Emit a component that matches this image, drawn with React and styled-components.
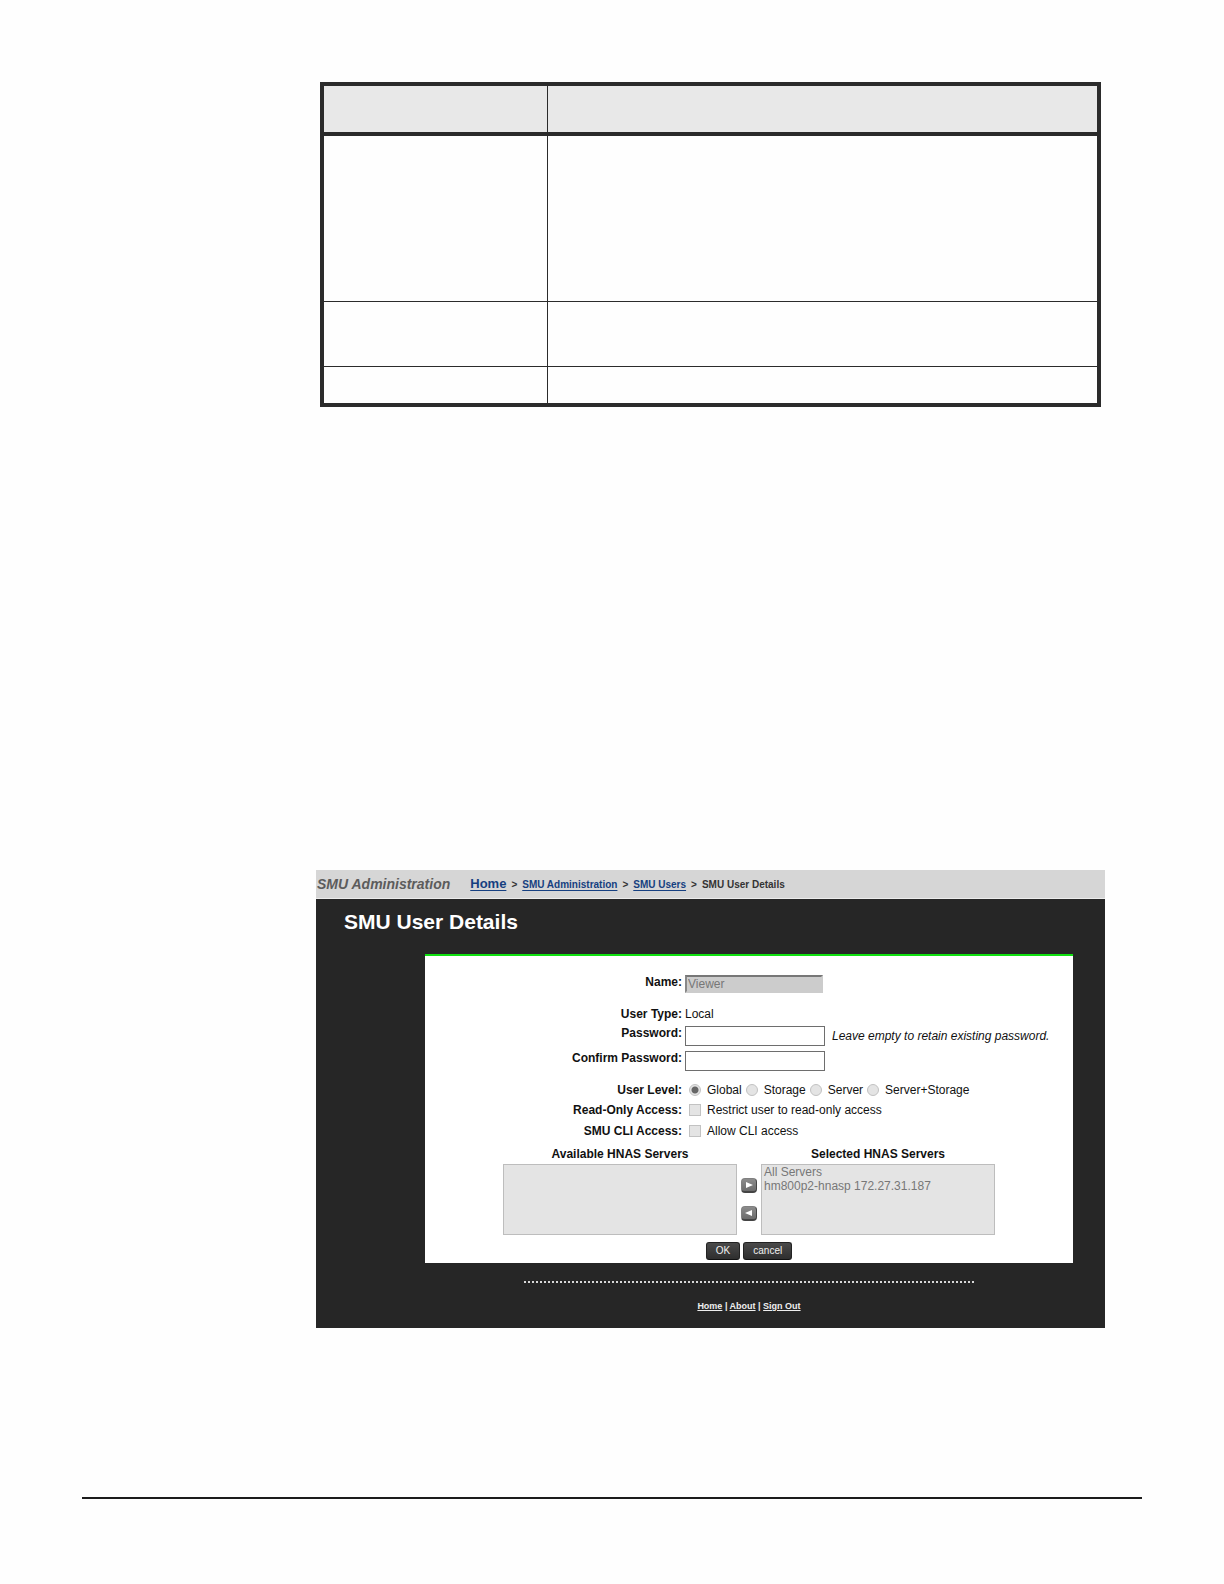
import React from "react";
import styled, { createGlobalStyle, css } from "styled-components";

const ink = "#2b2b2b";
const panel = "#262626";

const GlobalStyle = createGlobalStyle`
  *, *::before, *::after { box-sizing: border-box; }
  body {
    margin: 0;
    background: #fefefe;
    color: #111;
    font-family: "Liberation Sans", Arial, sans-serif;
    font-size: 12px;
    line-height: 14px;
  }
`;

const Page = styled.main`
  padding: 82px 82px 85px;
`;

const PageContent = styled.div`
  padding: 0 37px 0 234px;
`;

const TableFrame = styled.div`
  padding: 0 4px;
`;

const SpecTable = styled.table`
  width: 100%;
  table-layout: fixed;
  border: 4px solid ${ink};
  border-spacing: 0;
`;

const FirstColumn = styled.col`
  width: 224px;
`;

const cell = css`
  padding: 0;
  height: ${(p) => p.$height}px;
  &:first-child { border-right: 1px solid ${ink}; }
`;

const HeadCell = styled.th`
  ${cell}
  background: #e8e8e8;
  border-bottom: 4px solid ${ink};
`;

const BodyCell = styled.td`
  ${cell}
  tr:not(:last-child) > & { border-bottom: 1px solid ${ink}; }
`;

const Figure = styled.section`
  margin-top: 463px;
  background: ${panel};
`;

const TopBar = styled.header`
  display: flex;
  align-items: center;
  gap: 20px;
  height: 29px;
  padding: 0 1px;
  background: #d6d6d6;
  border-bottom: 1px solid #ececec;
`;

const SectionName = styled.span`
  color: #5c5c5c;
  font-size: 14px;
  font-style: italic;
  font-weight: bold;
`;

const Crumbs = styled.nav`
  display: flex;
  align-items: baseline;
  gap: 5px;
  color: #333;
  font-size: 10px;
  font-weight: bold;
`;

const Crumb = styled.a`
  color: #153f80;
  font-size: ${(p) => (p.$root ? 13 : 10)}px;
  text-underline-offset: 2px;
`;

const Title = styled.h1`
  margin: 0;
  padding: 11px 28px 20px;
  color: #fff;
  font-size: 21px;
  line-height: 24px;
`;

const Inner = styled.div`
  padding: 0 32px 0 109px;
`;

const Form = styled.form`
  padding: 19px 0 3px;
  background: #fff;
  border-top: 2px solid #0fe00f;
`;

const Row = styled.div`
  display: grid;
  grid-template-columns: 257px 1fr;
  column-gap: 3px;
  align-items: start;
  min-height: ${(p) => p.$height}px;
`;

const RowLabel = styled.label`
  font-weight: bold;
  text-align: right;
`;

const Value = styled.div`
  display: flex;
  align-items: center;
`;

const TextInput = styled.input`
  width: 140px;
  height: 20px;
  padding: 0 2px;
  background: #fff;
  border: 1px solid #6e6e6e;
  border-radius: 0;
  font: inherit;

  &:disabled {
    width: 138px;
    height: 18px;
    padding: 0 1px;
    background: #ccc;
    border: 2px solid #ccc;
    border-top-color: #777;
    border-left-color: #888;
    color: #777;
  }
`;

const Note = styled.em`
  margin-left: 7px;
`;

const Choices = styled.div`
  display: flex;
  gap: 4px;
  padding-left: 4px;
`;

const Choice = styled.label`
  display: flex;
  align-items: center;
  gap: 6px;
`;

const Mark = styled.input`
  appearance: none;
  width: 12px;
  height: 12px;
  margin: 0;
  background: #e4e4e4;
  border: 1px solid #c2c2c2;
  border-radius: ${(p) => (p.type === "radio" ? "50%" : "0")};

  &:checked {
    background: radial-gradient(circle, #666 0 3px, #e4e4e4 4px);
  }
`;

const Transfer = styled.div`
  display: grid;
  grid-template-columns: 234px 16px 234px;
  justify-content: center;
  column-gap: 4px;
  margin-bottom: 7px;
`;

const ListField = styled.div`
  display: flex;
  flex-direction: column;
  gap: 3px;
`;

const ListLabel = styled.label`
  font-weight: bold;
  text-align: center;
`;

const ListBox = styled.select`
  width: 100%;
  height: 71px;
  padding: 0;
  overflow: hidden;
  background: #e4e4e4;
  border: 1px solid #bdbdbd;
  border-radius: 0;
  font: inherit;
  opacity: 1;

  option {
    min-height: 13px;
    padding: 0 2px;
    color: #777;
    line-height: 13px;
  }
`;

const Arrows = styled.div`
  display: flex;
  flex-direction: column;
  justify-content: center;
  gap: 13px;
  padding-top: 17px;
`;

const ArrowButton = styled.button`
  display: grid;
  place-items: center;
  width: 16px;
  height: 15px;
  padding: 0;
  background: linear-gradient(#8c8c8c, #6c6c6c);
  border: 1px solid #808080;
  border-right-color: #444;
  border-bottom: 2px solid #444;
  border-radius: 4px;
`;

const Actions = styled.div`
  display: flex;
  justify-content: center;
  gap: 3px;
`;

const ActionButton = styled.button`
  height: 18px;
  padding: 0 9px;
  background: linear-gradient(#4a4a4a, #2e2e2e);
  border: 1px solid #222;
  border-bottom-color: #111;
  border-radius: 3px;
  color: #f0f0f0;
  font-family: inherit;
  font-size: 10px;
  line-height: 14px;
`;

const Footer = styled.footer`
  display: flex;
  flex-direction: column;
  align-items: center;
  gap: 16px;
  padding: 18px 0 15px;
`;

const Dots = styled.hr`
  width: 450px;
  max-width: 100%;
  margin: 0;
  border: 0;
  border-top: 2px dotted #d8d8d8;
`;

const FooterLinks = styled.nav`
  color: #eee;
  font-size: 9px;
  font-weight: bold;

  a { color: inherit; }
`;

const PageRule = styled.hr`
  margin: 169px 0 0;
  border: 0;
  border-top: 2px solid #1c1c1c;
`;

const levels = ["Global", "Storage", "Server", "Server+Storage"];
const bodyRows = [166, 65, 36];

function Arrow({ left }) {
  return (
    <svg width="8" height="8" viewBox="0 0 8 8" aria-hidden="true">
      <path d={left ? "M7 1v6L0 4z" : "M1 1v6l7-3z"} fill="#fff" />
    </svg>
  );
}

export default function App() {
  return (
    <Page>
      <GlobalStyle />
      <PageContent>
        <TableFrame>
          <SpecTable>
            <colgroup>
              <FirstColumn />
              <col />
            </colgroup>
            <thead>
              <tr>
                <HeadCell $height={50} />
                <HeadCell $height={50} />
              </tr>
            </thead>
            <tbody>
              {bodyRows.map((height) => (
                <tr key={height}>
                  <BodyCell $height={height} />
                  <BodyCell $height={height} />
                </tr>
              ))}
            </tbody>
          </SpecTable>
        </TableFrame>

        <Figure>
          <TopBar>
            <SectionName>SMU Administration</SectionName>
            <Crumbs>
              <Crumb href="#home" $root>Home</Crumb>
              <span>&gt;</span>
              <Crumb href="#admin">SMU Administration</Crumb>
              <span>&gt;</span>
              <Crumb href="#users">SMU Users</Crumb>
              <span>&gt;</span>
              <span>SMU User Details</span>
            </Crumbs>
          </TopBar>
          <Title>SMU User Details</Title>
          <Inner>
            <Form onSubmit={(e) => e.preventDefault()}>
              <Row $height={32}>
                <RowLabel htmlFor="name">Name:</RowLabel>
                <Value>
                  <TextInput id="name" type="text" defaultValue="Viewer" disabled />
                </Value>
              </Row>
              <Row $height={19}>
                <RowLabel as="span">User Type:</RowLabel>
                <Value>Local</Value>
              </Row>
              <Row $height={25}>
                <RowLabel htmlFor="password">Password:</RowLabel>
                <Value>
                  <TextInput id="password" type="password" />
                  <Note>Leave empty to retain existing password.</Note>
                </Value>
              </Row>
              <Row $height={32}>
                <RowLabel htmlFor="confirm">Confirm Password:</RowLabel>
                <Value>
                  <TextInput id="confirm" type="password" />
                </Value>
              </Row>
              <Row $height={20}>
                <RowLabel as="span" id="level">User Level:</RowLabel>
                <Choices role="radiogroup" aria-labelledby="level">
                  {levels.map((level) => (
                    <Choice key={level}>
                      <Mark type="radio" name="level" defaultChecked={level === "Global"} disabled />
                      {level}
                    </Choice>
                  ))}
                </Choices>
              </Row>
              <Row $height={21}>
                <RowLabel htmlFor="readonly">Read-Only Access:</RowLabel>
                <Choices>
                  <Choice>
                    <Mark id="readonly" type="checkbox" disabled />
                    Restrict user to read-only access
                  </Choice>
                </Choices>
              </Row>
              <Row $height={23}>
                <RowLabel htmlFor="cli">SMU CLI Access:</RowLabel>
                <Choices>
                  <Choice>
                    <Mark id="cli" type="checkbox" disabled />
                    Allow CLI access
                  </Choice>
                </Choices>
              </Row>
              <Transfer>
                <ListField>
                  <ListLabel htmlFor="available">Available HNAS Servers</ListLabel>
                  <ListBox id="available" multiple disabled />
                </ListField>
                <Arrows>
                  <ArrowButton type="button" aria-label="Add server"><Arrow /></ArrowButton>
                  <ArrowButton type="button" aria-label="Remove server"><Arrow left /></ArrowButton>
                </Arrows>
                <ListField>
                  <ListLabel htmlFor="selected">Selected HNAS Servers</ListLabel>
                  <ListBox id="selected" multiple disabled>
                    <option>All Servers</option>
                    <option>hm800p2-hnasp 172.27.31.187</option>
                  </ListBox>
                </ListField>
              </Transfer>
              <Actions>
                <ActionButton type="submit">OK</ActionButton>
                <ActionButton type="button">cancel</ActionButton>
              </Actions>
            </Form>
            <Footer>
              <Dots />
              <FooterLinks>
                <a href="#home">Home</a> | <a href="#about">About</a> | <a href="#signout">Sign Out</a>
              </FooterLinks>
            </Footer>
          </Inner>
        </Figure>
      </PageContent>
      <PageRule />
    </Page>
  );
}
